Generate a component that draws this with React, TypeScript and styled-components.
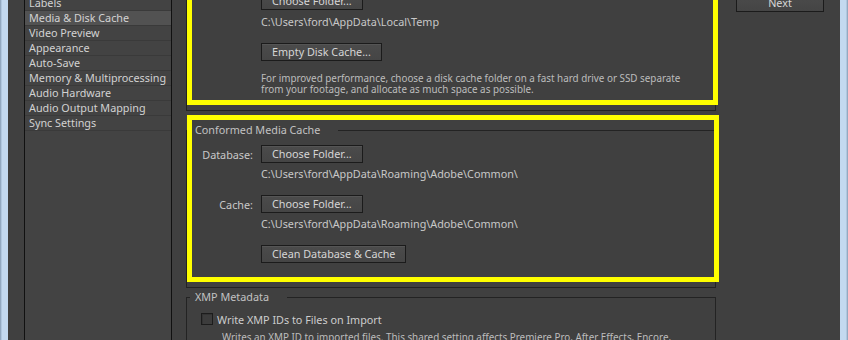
import React from 'react';
import styled, { createGlobalStyle } from 'styled-components';

const GlobalStyle = createGlobalStyle`
  html, body {
    margin: 0;
    padding: 0;
    background: #404040;
  }
  body {
    font-family: "Noto Sans", "DejaVu Sans", sans-serif;
    font-size: 10.8px;
    color: #cfcfcf;
    overflow: hidden;
  }
`;

const Window = styled.div`
  display: flex;
  align-items: flex-start;
  width: 848px;
  height: 340px;
  overflow: hidden;
  background: #404040;
`;

const FrameEdge = styled.div<{ $side: 'left' | 'right' }>`
  flex: 0 0 8px;
  align-self: stretch;
  background: ${p =>
    `linear-gradient(to ${p.$side}, #c3d9f0 0 6px, #b0c7df 6px 7px, #93a9c1 7px)`};
`;

const Sidebar = styled.div`
  flex: 0 0 164px;
  padding-left: 16px;
  box-sizing: border-box;
`;

const CategoryList = styled.ul`
  box-sizing: border-box;
  width: 148px;
  height: 380px;
  margin: -5px 0 0;
  padding: 0;
  list-style: none;
  background: #434343;
  border: 1px solid #111;
`;

const CategoryItem = styled.li<{ $selected?: boolean }>`
  height: 14px;
  line-height: 14px;
  padding-left: 4px;
  border-bottom: 1px solid #3a3a3a;
  background: ${p => (p.$selected ? '#525252' : 'transparent')};
  color: #d2d2d2;
  white-space: nowrap;
`;

const Main = styled.div`
  flex: 0 0 530px;
  margin-left: 14px;
  display: flex;
  flex-direction: column;
`;

const Section = styled.div<{ $top: number }>`
  position: relative;
  margin-top: ${p => p.$top}px;
`;

const Highlight = styled.div<{ $inset: string }>`
  position: absolute;
  inset: ${p => p.$inset};
  border: 5px solid #ffff00;
  pointer-events: none;
  z-index: 2;
`;

const Group = styled.fieldset<{ $padBottom: number }>`
  margin: 0;
  padding: 0 0 ${p => p.$padBottom}px;
  min-width: 0;
  border: 1px solid #232323;
`;

const Legend = styled.legend`
  margin-left: 3px;
  padding: 0 18px 0 5px;
  line-height: 14px;
  color: #c2c2c2;
`;

const FieldRow = styled.div<{ $top: number }>`
  display: flex;
  align-items: center;
  margin-top: ${p => p.$top}px;
`;

const FieldLabel = styled.span`
  flex: 0 0 66px;
  margin-right: 8px;
  text-align: right;
  color: #c8c8c8;
`;

const PathText = styled.div<{ $top: number }>`
  margin-top: ${p => p.$top}px;
  padding-left: 74px;
  line-height: 14px;
  color: #c8c8c8;
  white-space: nowrap;
`;

const Note = styled.p<{ $top: number; $indent: number }>`
  margin: ${p => p.$top}px 0 0;
  padding-left: ${p => p.$indent}px;
  font-size: 9.85px;
  line-height: 11px;
  color: #bdbdbd;
  white-space: nowrap;
`;

const Button = styled.button<{ $width?: number }>`
  box-sizing: border-box;
  height: 18px;
  ${p => (p.$width ? `width: ${p.$width}px;` : '')}
  padding: 0 10px;
  border: 1px solid #1b1b1b;
  border-radius: 0;
  background: linear-gradient(#4b4b4b, #454545);
  box-shadow: inset 0 1px 0 #555;
  color: #d6d6d6;
  font: inherit;
  line-height: 16px;
  white-space: nowrap;
`;

const CheckRow = styled.label`
  display: flex;
  align-items: center;
  height: 14px;
  margin-top: 8px;
  padding-left: 14px;
  color: #cdcdcd;
`;

const CheckBox = styled.span`
  box-sizing: border-box;
  width: 12px;
  height: 12px;
  margin-right: 4px;
  border: 1px solid #1c1c1c;
  background: #3c3c3c;
  box-shadow: inset 1px 1px 0 #333;
`;

const Actions = styled.div`
  flex: 0 0 124px;
  padding-left: 20px;
  box-sizing: border-box;
`;

const NextButton = styled(Button)`
  display: block;
  margin-top: -6px;
`;

const categories = [
  'Labels',
  'Media & Disk Cache',
  'Video Preview',
  'Appearance',
  'Auto-Save',
  'Memory & Multiprocessing',
  'Audio Hardware',
  'Audio Output Mapping',
  'Sync Settings',
];

const commonPath = 'C:\\Users\\ford\\AppData\\Roaming\\Adobe\\Common\\';

export default function App() {
  return (
    <>
      <GlobalStyle />
      <Window>
        <FrameEdge $side="left" />
        <Sidebar>
          <CategoryList>
            {categories.map(name => (
              <CategoryItem key={name} $selected={name === 'Media & Disk Cache'}>
                {name}
              </CategoryItem>
            ))}
          </CategoryList>
        </Sidebar>

        <Main>
          <Section $top={-20}>
            <Group $padBottom={15}>
              <FieldRow $top={11}>
                <FieldLabel />
                <Button>Choose Folder...</Button>
              </FieldRow>
              <PathText $top={5}>C:\Users\ford\AppData\Local\Temp</PathText>
              <FieldRow $top={14}>
                <FieldLabel />
                <Button>Empty Disk Cache...</Button>
              </FieldRow>
              <Note $top={12} $indent={74}>
                For improved performance, choose a disk cache folder on a fast hard drive or SSD separate
                <br />
                from your footage, and allocate as much space as possible.
              </Note>
            </Group>
            <Highlight $inset="6px -2px 6px 1px" />
          </Section>

          <Section $top={12}>
            <Group $padBottom={24}>
              <Legend>Conformed Media Cache</Legend>
              <FieldRow $top={8}>
                <FieldLabel>Database:</FieldLabel>
                <Button>Choose Folder...</Button>
              </FieldRow>
              <PathText $top={4}>{commonPath}</PathText>
              <FieldRow $top={14}>
                <FieldLabel>Cache:</FieldLabel>
                <Button>Choose Folder...</Button>
              </FieldRow>
              <PathText $top={4}>{commonPath}</PathText>
              <FieldRow $top={14}>
                <FieldLabel />
                <Button>Clean Database &amp; Cache</Button>
              </FieldRow>
            </Group>
            <Highlight $inset="-8px -3px 6px 1px" />
          </Section>

          <Section $top={2}>
            <Group $padBottom={20}>
              <Legend>XMP Metadata</Legend>
              <CheckRow>
                <CheckBox />
                Write XMP IDs to Files on Import
              </CheckRow>
              <Note $top={6} $indent={35}>
                Writes an XMP ID to imported files. This shared setting affects Premiere Pro, After Effects, Encore,
              </Note>
            </Group>
          </Section>
        </Main>

        <Actions>
          <NextButton $width={88}>Next</NextButton>
        </Actions>
        <FrameEdge $side="right" />
      </Window>
    </>
  );
}
